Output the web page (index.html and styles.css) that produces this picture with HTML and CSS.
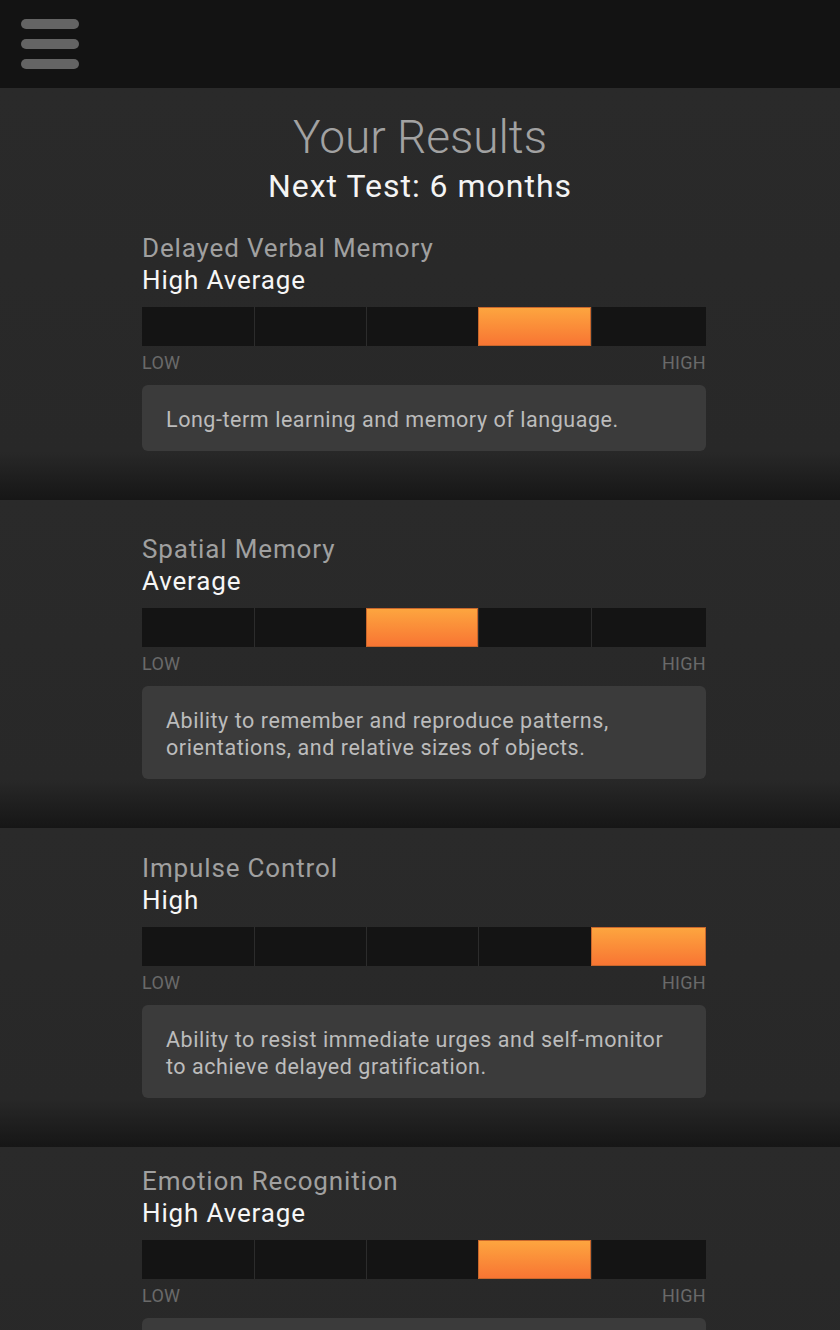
FILE: index.html
```html
<!DOCTYPE html>
<html lang="en">
<head>
<meta charset="utf-8">
<title>Your Results</title>
<link rel="stylesheet" href="styles.css">
</head>
<body>
<header class="topbar">
  <button class="menu" aria-label="Menu">
    <span class="menu-bar"></span>
    <span class="menu-bar"></span>
    <span class="menu-bar"></span>
  </button>
</header>
<main class="results">
  <section class="card card-first">
    <h1 class="page-title">Your Results</h1>
    <p class="next-test">Next Test: 6 months</p>
    <h2 class="metric-name">Delayed Verbal Memory</h2>
    <p class="metric-level">High Average</p>
    <div class="scale">
      <span class="seg"></span><span class="seg"></span><span class="seg"></span><span class="seg seg-on"></span><span class="seg"></span>
    </div>
    <div class="scale-labels"><span>LOW</span><span>HIGH</span></div>
    <p class="desc">Long-term learning and memory of language.</p>
  </section>
  <section class="card card-b">
    <h2 class="metric-name">Spatial Memory</h2>
    <p class="metric-level">Average</p>
    <div class="scale">
      <span class="seg"></span><span class="seg"></span><span class="seg seg-on"></span><span class="seg"></span><span class="seg"></span>
    </div>
    <div class="scale-labels"><span>LOW</span><span>HIGH</span></div>
    <p class="desc">Ability to remember and reproduce patterns,<br>orientations, and relative sizes of objects.</p>
  </section>
  <section class="card card-c">
    <h2 class="metric-name">Impulse Control</h2>
    <p class="metric-level">High</p>
    <div class="scale">
      <span class="seg"></span><span class="seg"></span><span class="seg"></span><span class="seg"></span><span class="seg seg-on"></span>
    </div>
    <div class="scale-labels"><span>LOW</span><span>HIGH</span></div>
    <p class="desc">Ability to resist immediate urges and self-monitor<br>to achieve delayed gratification.</p>
  </section>
  <section class="card card-d">
    <h2 class="metric-name">Emotion Recognition</h2>
    <p class="metric-level">High Average</p>
    <div class="scale">
      <span class="seg"></span><span class="seg"></span><span class="seg"></span><span class="seg seg-on"></span><span class="seg"></span>
    </div>
    <div class="scale-labels"><span>LOW</span><span>HIGH</span></div>
    <div class="desc desc-empty"></div>
  </section>
</main>
</body>
</html>
```

FILE: styles.css
```css
* { box-sizing: border-box; }
html, body { margin: 0; padding: 0; }
body {
  background: #2a2a2a;
  font-family: Roboto, "Liberation Sans", Arial, sans-serif;
  height: 1330px;
  overflow: hidden;
}
.topbar {
  height: 88px;
  background: #131313;
  padding: 19px 0 0 21px;
}
.menu {
  display: flex;
  flex-direction: column;
  gap: 10px;
  width: 58px;
  padding: 0;
  border: 0;
  background: none;
}
.menu-bar {
  display: block;
  width: 58px;
  height: 10px;
  border-radius: 5px;
  background: #646464;
}
.results { display: flex; flex-direction: column; }
.card {
  padding: 34px 134px 49px 142px;
  background: linear-gradient(to bottom, #2a2a2a 0, #282828 calc(100% - 48px), #161616 100%);
}
.card-first { padding-top: 22px; }
.card-b { padding-top: 33px; }
.card-c { padding-top: 24px; }
.card-d { padding-top: 18px; }
.page-title {
  margin: 0 -134px 0 -142px;
  text-align: center;
  font-weight: 300;
  font-size: 46px;
  line-height: 54px;
  color: #a2a2a2;
}
.next-test {
  margin: 3px -134px 27px -142px;
  text-align: center;
  font-size: 32px;
  line-height: 38px;
  letter-spacing: 1px;
  color: #f4f4f4;
}
.metric-name {
  margin: 0;
  font-weight: 400;
  font-size: 26px;
  line-height: 32px;
  letter-spacing: 0.85px;
  color: #a0a0a0;
}
.metric-level {
  margin: 0;
  font-size: 26px;
  line-height: 32px;
  letter-spacing: 0.85px;
  color: #f6f6f6;
}
.scale {
  margin-top: 11px;
  height: 39px;
  display: grid;
  grid-template-columns: 112px 112px 112px 113px 1fr;
}
.seg {
  background: #141414;
  border-left: 1px solid #2c2c2c;
}
.seg:first-child { border-left: 0; }
.seg-on {
  background: linear-gradient(to bottom, #fda53f, #f87533);
  border: 1px solid #c9672c;
}
.scale-labels {
  margin-top: 8px;
  display: flex;
  justify-content: space-between;
  font-size: 18px;
  line-height: 18px;
  letter-spacing: 0.3px;
  color: #6a6a6a;
}
.desc {
  margin: 13px 0 0;
  padding: 21px 24px 18px;
  background: #3b3b3b;
  border-radius: 6px;
  font-size: 21.5px;
  line-height: 27px;
  letter-spacing: 0.55px;
  color: #bcbcbc;
}
.desc-empty { height: 66px; }
```
